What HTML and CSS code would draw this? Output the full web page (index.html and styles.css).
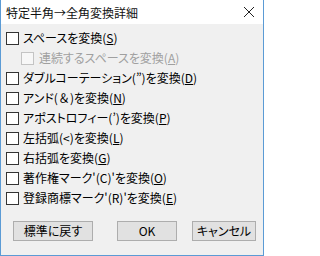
FILE: index.html
```html
<!DOCTYPE html>
<html lang="ja">
<head>
<meta charset="utf-8">
<link rel="stylesheet" href="styles.css">
</head>
<body>
<div class="window">
  <div class="titlebar">
    <span class="title">特定半角→全角変換詳細</span>
    <svg class="close" width="12" height="12" viewBox="0 0 12 12"><path d="M1 1 L11 11 M11 1 L1 11" stroke="#222" stroke-width="1" fill="none"/></svg>
  </div>
  <div class="content">
    <div class="row"><span class="box"></span><span class="label">スペースを変換(<u>S</u>)</span></div>
    <div class="row indent disabled"><span class="box"></span><span class="label">連続するスペースを変換(<u>A</u>)</span></div>
    <div class="row"><span class="box"></span><span class="label">ダブルコーテーション(”)を変換(<u>D</u>)</span></div>
    <div class="row"><span class="box"></span><span class="label">アンド(<span class="fw">＆</span>)を変換(<u>N</u>)</span></div>
    <div class="row"><span class="box"></span><span class="label">アポストロフィー(’)を変換(<u>P</u>)</span></div>
    <div class="row"><span class="box"></span><span class="label">左括弧(&lt;)を変換(<u>L</u>)</span></div>
    <div class="row"><span class="box"></span><span class="label">右括弧を変換(<u>G</u>)</span></div>
    <div class="row"><span class="box"></span><span class="label">著作権マーク'(C)'を変換(<u>O</u>)</span></div>
    <div class="row"><span class="box"></span><span class="label">登録商標マーク'(R)'を変換(<u>E</u>)</span></div>
  </div>
  <div class="footer">
    <button class="btn btn-reset">標準に戻す</button>
    <button class="btn btn-ok">OK</button>
    <button class="btn btn-cancel">キャンセル</button>
  </div>
</div>
</body>
</html>
```
FILE: styles.css
```css
html, body {
  margin: 0;
  padding: 0;
}
body {
  width: 264px;
  height: 256px;
  overflow: hidden;
  font-family: "Noto Sans CJK JP", sans-serif;
  font-feature-settings: "palt";
  font-size: 12px;
  color: #000;
}
.window {
  width: 264px;
  height: 256px;
  box-sizing: border-box;
  background: #f0f0f0;
  border-left: 1px solid #5b9bd5;
  border-right: 1px solid #5b9bd5;
  border-bottom: 1px solid #5b9bd5;
  display: flex;
  flex-direction: column;
}
.titlebar {
  height: 24px;
  background: #fff;
  display: flex;
  align-items: center;
  justify-content: space-between;
  padding: 0 8px 0 5px;
  flex-shrink: 0;
}
.title {
  font-size: 12px;
  font-feature-settings: normal;
  color: #111;
  line-height: 1;
  padding-top: 1px;
}
.close {
  display: block;
}
.content {
  padding: 4px 0 0 5px;
  display: flex;
  flex-direction: column;
}
.row {
  height: 20px;
  display: flex;
  align-items: center;
  gap: 4px;
  white-space: nowrap;
}
.row.indent {
  padding-left: 15px;
  gap: 5px;
}
.box {
  width: 13px;
  height: 13px;
  box-sizing: border-box;
  border: 1px solid #333;
  background: #fff;
  flex-shrink: 0;
}
.label {
  line-height: 1;
}
.label u {
  text-decoration-thickness: 1px;
  text-underline-offset: 1px;
}
.fw {
  font-feature-settings: normal;
}
.disabled .box {
  border-color: #c4c4c4;
  background: #f7f7f7;
}
.disabled .label {
  color: #a0a0a0;
}
.footer {
  display: flex;
  padding: 13px 0 0 12px;
}
.btn {
  height: 20px;
  box-sizing: border-box;
  border: 1px solid #adadad;
  background: #e1e1e1;
  font-family: "Noto Sans CJK JP", sans-serif;
  font-feature-settings: "palt";
  font-size: 12px;
  color: #000;
  padding: 0;
  line-height: 1;
}
.btn-reset {
  width: 80px;
}
.btn-ok {
  width: 60px;
  margin-left: 24px;
}
.btn-cancel {
  width: 64px;
  margin-left: 15px;
}
```
